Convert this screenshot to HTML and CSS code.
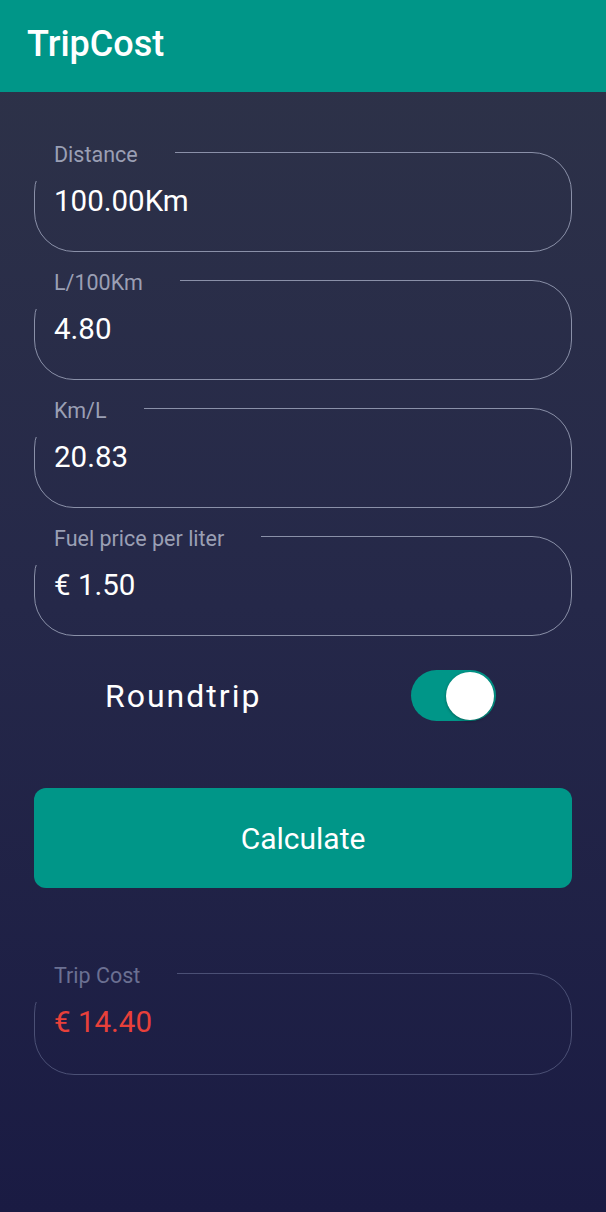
FILE: index.html
```html
<!DOCTYPE html>
<html lang="en">
<head>
<meta charset="utf-8">
<title>TripCost</title>
<link rel="stylesheet" href="styles.css">
</head>
<body>
<header class="appbar"><h1 class="title">TripCost</h1></header>
<main class="content">
  <div class="field"><span class="label">Distance</span><span class="value">100.00Km</span></div>
  <div class="field"><span class="label">L/100Km</span><span class="value">4.80</span></div>
  <div class="field"><span class="label">Km/L</span><span class="value">20.83</span></div>
  <div class="field"><span class="label">Fuel price per liter</span><span class="value">€ 1.50</span></div>
  <div class="toggle-row">
    <span class="toggle-text">Roundtrip</span>
    <span class="switch on"><span class="thumb"></span></span>
  </div>
  <button class="calc">Calculate</button>
  <div class="field result"><span class="label">Trip Cost</span><span class="value">€ 14.40</span></div>
</main>
</body>
</html>
```
FILE: styles.css
```css
html, body {
  margin: 0;
  padding: 0;
}
body {
  width: 606px;
  min-height: 1212px;
  font-family: Roboto, "Noto Sans", sans-serif;
  background: linear-gradient(180deg, #2e3348 0%, #252849 50%, #1a1b43 100%) fixed;
  color: #ffffff;
}
.appbar {
  height: 92px;
  background: #009688;
  display: flex;
  align-items: center;
  padding: 0 27px;
  box-sizing: border-box;
}
.title {
  margin: 0 0 4px 0;
  font-size: 36px;
  font-weight: 500;
  color: #ffffff;
}
.content {
  padding: 60px 34px 0 34px;
  display: flex;
  flex-direction: column;
}
.field {
  position: relative;
  height: 100px;
  box-sizing: border-box;
  border: 1.5px solid #8a90a8;
  border-radius: 40px;
  padding: 31px 0 0 19px;
  margin-bottom: 28px;
}
.label {
  position: absolute;
  left: -6px;
  top: -12px;
  padding: 0 37px 12px 25px;
  font-size: 21.5px;
  line-height: 28px;
  color: #9a9fb4;
  background: linear-gradient(180deg, #2e3348 0%, #252849 50%, #1a1b43 100%) fixed;
}
.value {
  display: block;
  font-size: 29.5px;
  line-height: 34px;
  color: #ffffff;
}
.toggle-row {
  display: flex;
  align-items: center;
  height: 51px;
  margin-top: 6px;
  padding-left: 71px;
  padding-right: 76px;
}
.toggle-text {
  font-size: 32px;
  letter-spacing: 2px;
  color: #ffffff;
}
.switch {
  margin-left: auto;
  width: 85px;
  height: 51px;
  border-radius: 26px;
  background: #009688;
  display: flex;
  align-items: center;
  justify-content: flex-end;
  padding-right: 2px;
  box-sizing: border-box;
}
.thumb {
  width: 48px;
  height: 48px;
  border-radius: 50%;
  background: #ffffff;
  box-shadow: 0 1px 3px rgba(0,0,0,0.35);
}
.calc {
  margin-top: 67px;
  height: 100px;
  border: none;
  border-radius: 12px;
  background: #009688;
  color: #ffffff;
  font-family: Roboto, sans-serif;
  font-size: 30px;
  padding: 0;
}
.field.result {
  margin-top: 85px;
  height: 102px;
  border-color: #4b5075;
  border-width: 1px;
}
.field.result .label {
  color: #6b7092;
}
.field.result .value {
  color: #e8403a;
}
```
